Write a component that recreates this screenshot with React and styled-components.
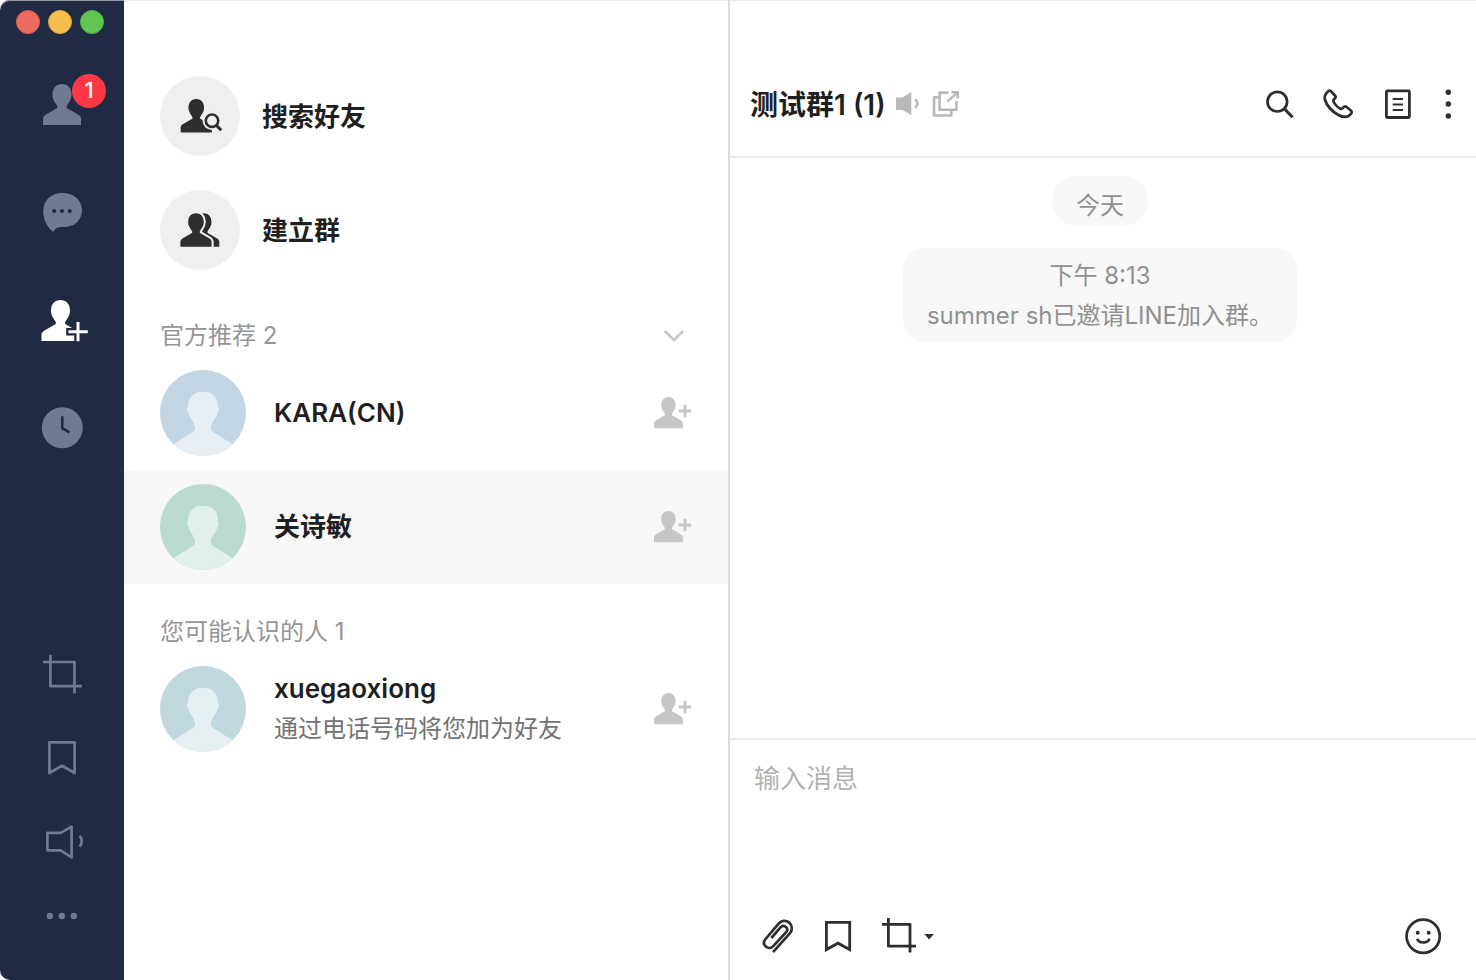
import React from 'react';
import styled, { createGlobalStyle } from 'styled-components';

const NAVY = '#202a43';
const NAV_ICON = '#717a93';
const INK = '#2e2e2e';

const GlobalStyle = createGlobalStyle`
  *, *::before, *::after { box-sizing: border-box; }
  body {
    margin: 0;
    background: #fff;
    color: #1f1f1f;
    font-family: Inter, "Noto Sans CJK SC", sans-serif;
    font-size: 24px;
  }
  button, textarea { font: inherit; color: inherit; }
  h1, h2, p, ul { margin: 0; padding: 0; }
  ul { list-style: none; }
`;

const Window = styled.div`
  display: flex;
  min-height: 100vh;
`;

const Sidebar = styled.aside`
  flex: 0 0 124px;
  display: flex;
  flex-direction: column;
  padding-bottom: 32px;
  background: ${NAVY};
  border-radius: 10px 0 0 10px;
  box-shadow: inset 0 1px 0 #959aa5;
`;

const TrafficLights = styled.div`
  display: flex;
  gap: 8px;
  height: 51px;
  padding: 10px 16px 0;
`;

const Light = styled.button`
  width: 24px;
  height: 24px;
  padding: 0;
  border: 1px solid ${(p) => p.$edge};
  border-radius: 50%;
  background: ${(p) => p.$fill};
`;

const Nav = styled.nav`
  display: flex;
  flex-direction: column;
`;

const Tools = styled.div`
  display: flex;
  flex-direction: column;
  margin-top: auto;
`;

const SideButton = styled.button`
  position: relative;
  display: flex;
  align-items: center;
  justify-content: center;
  height: ${(p) => p.$height}px;
  padding: 0;
  border: 0;
  background: none;
  color: ${(p) => (p.$active ? '#fff' : NAV_ICON)};
`;

const Badge = styled.span`
  position: absolute;
  top: 23px;
  right: 18px;
  width: 34px;
  height: 34px;
  border-radius: 50%;
  background: #ff3944;
  color: #fff;
  font-size: 22px;
  line-height: 33px;
  font-weight: 500;
  text-align: center;
`;

const Icon = styled.svg`
  display: block;
  flex: none;
  overflow: visible;
  fill: none;
  stroke: none;
`;

const FriendsPanel = styled.main`
  flex: 0 0 606px;
  border-right: 2px solid #d9dee2;
  box-shadow: inset 0 1px 0 #ececec;
`;

const Actions = styled.div`
  display: flex;
  flex-direction: column;
  gap: 34px;
  padding: 76px 36px 18px;
`;

const ActionButton = styled.button`
  display: flex;
  align-items: center;
  gap: 22px;
  padding: 0;
  border: 0;
  background: none;
  font-size: 26px;
  line-height: 40px;
  font-weight: 700;
  text-align: left;
`;

const ActionLabel = styled.span`
  padding-top: 2px;
`;

const ActionIcon = styled.span`
  display: flex;
  align-items: center;
  justify-content: center;
  width: 80px;
  height: 80px;
  border-radius: 50%;
  background: #efefef;
  color: ${INK};
`;

const Section = styled.section`
  padding-top: 28px;
`;

const SectionHeader = styled.div`
  display: flex;
  align-items: center;
  justify-content: space-between;
  height: 40px;
  padding: 0 36px;
  color: #959595;
`;

const SectionTitle = styled.h2`
  font-size: 24px;
  line-height: 40px;
  font-weight: 400;
`;

const IconButton = styled.button`
  display: flex;
  align-items: center;
  justify-content: center;
  padding: 0;
  border: 0;
  background: none;
  color: ${(p) => p.$color || INK};
`;

const Row = styled.li`
  display: flex;
  align-items: center;
  padding: 14px 36px;
  background: ${(p) => (p.$selected ? '#f7f7f7' : 'transparent')};
`;

const RowText = styled.div`
  flex: 1;
  min-width: 0;
  padding-left: 28px;
`;

const Name = styled.p`
  font-size: 26px;
  line-height: 40px;
  font-weight: 600;
`;

const Note = styled.p`
  font-size: 24px;
  line-height: 40px;
  color: #737373;
`;

const Chat = styled.section`
  flex: 1;
  min-width: 0;
  display: flex;
  flex-direction: column;
  box-shadow: inset 0 1px 0 #ececec;
`;

const ChatHeader = styled.header`
  display: flex;
  align-items: center;
  gap: 10px;
  height: 158px;
  padding: 52px 18px 0 20px;
  border-bottom: 2px solid #ebebeb;
`;

const ChatTitle = styled.h1`
  padding-top: 2px;
  font-size: 28px;
  line-height: 40px;
  font-weight: 600;
  white-space: nowrap;
`;

const HeaderTools = styled.div`
  display: flex;
  gap: 18px;
  margin-left: auto;
`;

const Messages = styled.div`
  flex: 1;
  display: flex;
  flex-direction: column;
  align-items: center;
  gap: 22px;
  padding: 18px 6px 18px 0;
  color: #909090;
`;

const DateChip = styled.p`
  padding: 10px 24px 0;
  border-radius: 25px;
  background: #f8f8f8;
  line-height: 40px;
`;

const Notice = styled.div`
  padding: 8px 24px 6px;
  border-radius: 22px;
  background: #f8f8f8;
  line-height: 40px;
  text-align: center;
`;

const Composer = styled.form`
  display: flex;
  flex-direction: column;
  height: 242px;
  border-top: 2px solid #ebebeb;
`;

const MessageInput = styled.textarea`
  flex: 1;
  padding: 19px 24px;
  border: 0;
  outline: 0;
  resize: none;
  background: none;
  font-size: 26px;
  line-height: 40px;
  &::placeholder { color: #b2b2b2; opacity: 1; }
`;

const ComposerTools = styled.div`
  display: flex;
  gap: 20px;
  padding: 0 33px 24px 28px;
`;

const Spacer = styled.span`
  flex: 1;
`;

const PERSON =
  'M24 3C29.5 3 33.5 7 33.5 13.5C33.5 19 31 21 28.8 25C28.5 26 28.5 27 29.5 27.5L40 33.5C42 34.7 43 36 43 38V44H5V38C5 36 6 34.7 8 33.5L18.5 27.5C19.5 27 19.5 26 19.2 25C17 21 14.5 19 14.5 13.5C14.5 7 18.5 3 24 3Z';

const Svg = ({ w = 48, h = w, children }) => (
  <Icon width={w} height={h} viewBox={`0 0 ${w} ${h}`} aria-hidden="true">
    {children}
  </Icon>
);

const Lines = (props) => <path fill="none" stroke="currentColor" strokeLinejoin="round" {...props} />;

const PersonIcon = () => (
  <Svg>
    <path d={PERSON} fill="currentColor" />
  </Svg>
);

const ChatIcon = () => (
  <Svg>
    <path
      d="M24.3 4C36 4 44 11.5 44 21C44 31.5 36 38 26.5 38C20 37.8 17.5 38.5 15.2 43.3C9 37.5 5.2 31 5.2 22C5.2 11.5 13 4 24.3 4Z"
      fill="currentColor"
    />
    {[16.2, 24, 31.8].map((x) => (
      <circle key={x} cx={x} cy="22" r="2.1" fill={NAVY} />
    ))}
  </Svg>
);

const AddPersonIcon = () => (
  <Svg>
    <path d={PERSON} fill="currentColor" transform="translate(-1.5 0)" />
    <path d="M40 23V46M28.2 34.7H52" stroke={NAVY} strokeWidth="7.6" />
    <path d="M40 25V44.2M30.5 34.7H49.8" stroke="currentColor" strokeWidth="3" />
  </Svg>
);

const ClockIcon = () => (
  <Svg>
    <circle cx="24.3" cy="22.7" r="20.5" fill="currentColor" />
    <path d="M24.3 11.3V23.2L31.5 27.3" stroke={NAVY} strokeWidth="2.6" />
  </Svg>
);

const SideCropIcon = () => (
  <Svg>
    <Lines d="M5 12H36.5V43.5M12.4 5V36.2H44" strokeWidth="2.7" />
  </Svg>
);

const SideBookmarkIcon = () => (
  <Svg>
    <Lines d="M11.4 8.4H36.6V39L24 31.6L11.4 39Z" strokeWidth="2.7" />
  </Svg>
);

const SideSpeakerIcon = () => (
  <Svg>
    <Lines d="M9.4 14.9H22.7L33.6 8.7V39.3L22.7 32.4H9.4Z" strokeWidth="2.7" />
    <Lines d="M41.6 17.8C44.4 20.7 44.4 25.7 41.6 28.5" strokeWidth="2.7" />
  </Svg>
);

const MoreIcon = () => (
  <Svg>
    {[11.8, 23.8, 35.8].map((x) => (
      <circle key={x} cx={x} cy="24" r="3.2" fill="currentColor" />
    ))}
  </Svg>
);

const FindPersonIcon = () => (
  <Svg>
    <path d={PERSON} fill="currentColor" transform="translate(.6 4.5) scale(.82)" />
    <circle cx="36" cy="28.7" r="9.4" fill="#efefef" />
    <path d="M40 33L46 40" stroke="#efefef" strokeWidth="6" />
    <circle cx="36" cy="28.7" r="6.2" stroke="currentColor" strokeWidth="2.6" />
    <path d="M40.4 33.4L45.2 38.3" stroke="currentColor" strokeWidth="3" />
  </Svg>
);

const GroupIcon = () => (
  <Svg>
    <path d={PERSON} fill="currentColor" transform="translate(8 4.7) scale(.82)" />
    <path
      d={PERSON}
      fill="currentColor"
      stroke="#efefef"
      strokeWidth="5"
      paintOrder="stroke"
      transform="translate(.3 4.7) scale(.82)"
    />
  </Svg>
);

const ChevronIcon = () => (
  <Svg w={36} h={24}>
    <path d="M8.8 7L18 16L27.2 7" stroke="currentColor" strokeWidth="2.6" />
  </Svg>
);

const AddFriendIcon = () => (
  <Svg w={40}>
    <path d={PERSON} fill="currentColor" transform="translate(-1.8 1.7) scale(.76)" />
    <path d="M33 11.8V24.3M26.7 18H39.3" stroke="currentColor" strokeWidth="2.8" />
  </Svg>
);

const Avatar = ({ bg, fg, id }) => (
  <Svg w={86}>
    <clipPath id={id}>
      <circle cx="43" cy="43" r="43" />
    </clipPath>
    <g clipPath={`url(#${id})`}>
      <rect width="86" height="86" fill={bg} />
      <path
        d="M43 21.7C52.5 21.7 58 27.5 58 36.5C59 38 59 40.5 57.7 43C56.2 48 52 51.5 50.9 57C50.7 60 51.5 61 53.5 62.2L72.7 74.3L86 83V86H0V83L13.3 74.3L32.5 62.2C34.5 61 35.3 60 35.1 57C34 51.5 29.8 48 28.3 43C27 40.5 27 38 28 36.5C28 27.5 33.5 21.7 43 21.7Z"
        fill={fg}
      />
    </g>
  </Svg>
);

const SpeakerIcon = () => (
  <Svg w={26} h={28}>
    <path d="M0 7.5H6.5L15.3 2V25L6.5 20H0Z" fill="currentColor" />
    <path d="M19 9.3C22.2 11.7 22.2 15.3 19 17.7" stroke="currentColor" strokeWidth="2.6" />
  </Svg>
);

const PopOutIcon = () => (
  <Svg w={28}>
    <Lines d="M7.5 7.4H2V25.5H19.3V20" strokeWidth="2.6" />
    <Lines d="M16.5 2.6H7.6V19.7H24.5V11" strokeWidth="2.6" />
    <Lines d="M15.3 11.7L25 2.8" strokeWidth="2.4" />
    <Lines d="M19.5 2.3H25.8V8.3" strokeWidth="2.6" strokeLinejoin="miter" />
  </Svg>
);

const SearchIcon = () => (
  <Svg w={40}>
    <circle cx="17.3" cy="17.7" r="9.8" stroke="currentColor" strokeWidth="2.7" />
    <path d="M24.2 24.6L32.6 33.3" stroke="currentColor" strokeWidth="3" />
  </Svg>
);

const PhoneIcon = () => (
  <Svg w={40}>
    <Lines
      d="M9.5 8C10.8 6.3 12.3 6.3 13.6 7.8L17.3 12C18 13 17.8 13.8 16.5 14.8C15 16 15 17 16 18.6C17.6 21.2 20 23.7 22.3 24.8C23.5 25.3 24.2 25 25 23.8C26 22.3 27.2 22 28.5 23L32.6 26.3C34 27.5 34 28.6 32.8 30C30 33.6 26 34 20.5 31C13.8 27.3 8.5 21 6.9 15.5C6 12.3 7.3 10 9.5 8Z"
      strokeWidth="2.7"
    />
  </Svg>
);

const NoteIcon = () => (
  <Svg w={40}>
    <rect x="10.4" y="6.9" width="23" height="26.6" rx="1" stroke="currentColor" strokeWidth="2.8" />
    <path d="M16.7 15H27M16.7 20.5H27M16.7 26H27" stroke="currentColor" strokeWidth="2.2" />
  </Svg>
);

const KebabIcon = () => (
  <Svg w={24} h={40}>
    {[8.3, 20, 32].map((y) => (
      <circle key={y} cx="14.3" cy={y} r="2.7" fill="currentColor" />
    ))}
  </Svg>
);

const ClipIcon = () => (
  <Svg w={40}>
    <Lines
      d="M13.4 22L22.3 11.6C24 9.6 26.3 9.6 28 11C29.6 12.5 29.6 14.6 28 16.4L15 30.4C12.8 32.6 9.8 32.4 7.8 30.6C5.4 28.4 5.6 25.4 7.6 23L20.6 7.6C23.4 4.4 27.8 3.8 31.2 6.6C34.8 9.8 34.6 14.4 31.6 17.6L15 36.2"
      strokeWidth="2.7"
    />
  </Svg>
);

const BookmarkIcon = () => (
  <Svg w={40}>
    <Lines d="M8.4 6.4H31.7V33.6L20 27.2L8.4 33.6Z" strokeWidth="2.8" strokeLinejoin="miter" />
  </Svg>
);

const CropMenuIcon = () => (
  <Svg w={60} h={40}>
    <Lines d="M4 8.3H32V36.6M10.4 2V30.2H38" strokeWidth="2.8" />
    <path d="M46.3 18H55.9L51.1 23.4Z" fill="currentColor" />
  </Svg>
);

const SmileIcon = () => (
  <Svg w={40}>
    <circle cx="20.2" cy="20.2" r="16.6" stroke="currentColor" strokeWidth="2.7" />
    <circle cx="14.7" cy="16.8" r="2" fill="currentColor" />
    <circle cx="25.7" cy="16.8" r="2" fill="currentColor" />
    <path d="M14 22.7C16.2 27.8 24.4 27.8 26.6 22.7" stroke="currentColor" strokeWidth="2.6" />
  </Svg>
);

const FriendRow = ({ id, name, note, bg, fg, selected }) => (
  <Row $selected={selected}>
    <Avatar id={id} bg={bg} fg={fg} />
    <RowText>
      <Name>{name}</Name>
      {note && <Note>{note}</Note>}
    </RowText>
    <IconButton type="button" $color="#c6c6c6" aria-label={`添加 ${name}`}>
      <AddFriendIcon />
    </IconButton>
  </Row>
);

export default function App() {
  return (
    <>
      <GlobalStyle />
      <Window>
        <Sidebar>
          <TrafficLights>
            <Light type="button" aria-label="关闭" $fill="#ed6a5e" $edge="#e0574c" />
            <Light type="button" aria-label="最小化" $fill="#f5bf4f" $edge="#e0a63c" />
            <Light type="button" aria-label="缩放" $fill="#61c654" $edge="#50b240" />
          </TrafficLights>
          <Nav>
            <SideButton type="button" $height={108} aria-label="好友">
              <PersonIcon />
              <Badge>1</Badge>
            </SideButton>
            <SideButton type="button" $height={108} aria-label="聊天"><ChatIcon /></SideButton>
            <SideButton type="button" $height={108} $active aria-label="添加好友"><AddPersonIcon /></SideButton>
            <SideButton type="button" $height={108} aria-label="动态"><ClockIcon /></SideButton>
          </Nav>
          <Tools>
            <SideButton type="button" $height={84} aria-label="截图"><SideCropIcon /></SideButton>
            <SideButton type="button" $height={84} aria-label="收藏"><SideBookmarkIcon /></SideButton>
            <SideButton type="button" $height={84} aria-label="声音"><SideSpeakerIcon /></SideButton>
            <SideButton type="button" $height={64} aria-label="更多"><MoreIcon /></SideButton>
          </Tools>
        </Sidebar>

        <FriendsPanel>
          <Actions>
            <ActionButton type="button">
              <ActionIcon><FindPersonIcon /></ActionIcon>
              <ActionLabel>搜索好友</ActionLabel>
            </ActionButton>
            <ActionButton type="button">
              <ActionIcon><GroupIcon /></ActionIcon>
              <ActionLabel>建立群</ActionLabel>
            </ActionButton>
          </Actions>
          <Section>
            <SectionHeader>
              <SectionTitle>官方推荐 2</SectionTitle>
              <IconButton type="button" $color="#c6c6c6" aria-label="收起"><ChevronIcon /></IconButton>
            </SectionHeader>
            <ul>
              <FriendRow id="kara" name="KARA(CN)" bg="#c4d5e3" fg="#e7eef4" />
              <FriendRow id="guan" name="关诗敏" bg="#b9dacd" fg="#e2f0ea" selected />
            </ul>
          </Section>
          <Section>
            <SectionHeader>
              <SectionTitle>您可能认识的人 1</SectionTitle>
            </SectionHeader>
            <ul>
              <FriendRow id="xue" name="xuegaoxiong" note="通过电话号码将您加为好友" bg="#c1d8df" fg="#e6eff2" />
            </ul>
          </Section>
        </FriendsPanel>

        <Chat>
          <ChatHeader>
            <ChatTitle>测试群1 (1)</ChatTitle>
            <IconButton type="button" $color="#b9b9b9" aria-label="通知"><SpeakerIcon /></IconButton>
            <IconButton type="button" $color="#b9b9b9" aria-label="新窗口"><PopOutIcon /></IconButton>
            <HeaderTools>
              <IconButton type="button" aria-label="搜索"><SearchIcon /></IconButton>
              <IconButton type="button" aria-label="通话"><PhoneIcon /></IconButton>
              <IconButton type="button" aria-label="记事本"><NoteIcon /></IconButton>
              <IconButton type="button" aria-label="菜单"><KebabIcon /></IconButton>
            </HeaderTools>
          </ChatHeader>
          <Messages>
            <DateChip>今天</DateChip>
            <Notice>
              <p>下午 8:13</p>
              <p>summer sh已邀请LINE加入群。</p>
            </Notice>
          </Messages>
          <Composer>
            <MessageInput placeholder="输入消息" aria-label="输入消息" />
            <ComposerTools>
              <IconButton type="button" aria-label="附件"><ClipIcon /></IconButton>
              <IconButton type="button" aria-label="收藏"><BookmarkIcon /></IconButton>
              <IconButton type="button" aria-label="截图"><CropMenuIcon /></IconButton>
              <Spacer />
              <IconButton type="button" aria-label="表情"><SmileIcon /></IconButton>
            </ComposerTools>
          </Composer>
        </Chat>
      </Window>
    </>
  );
}
